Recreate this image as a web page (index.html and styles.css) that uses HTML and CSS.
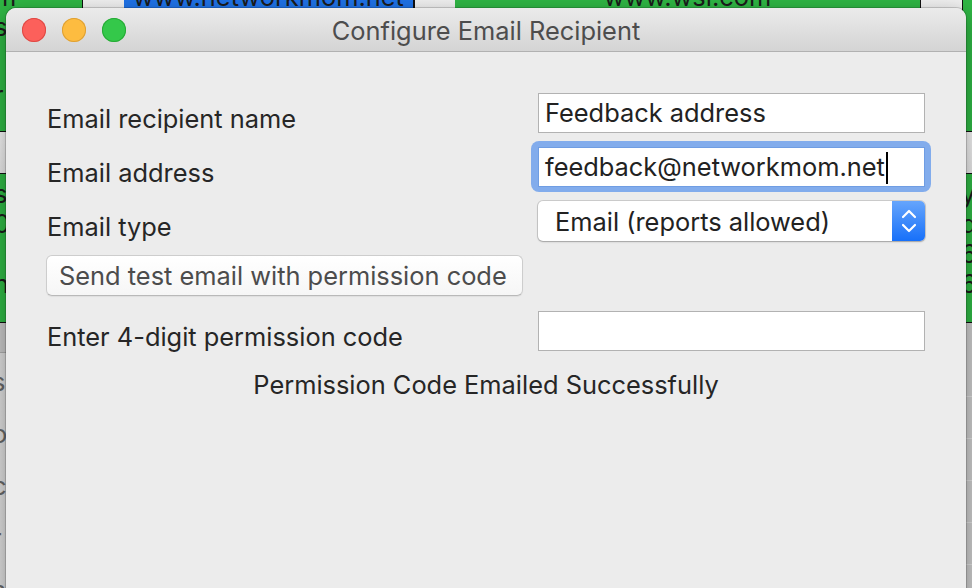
FILE: index.html
```html
<!DOCTYPE html>
<html lang="en">
<head>
<meta charset="utf-8">
<title>Configure Email Recipient</title>
<link rel="stylesheet" href="styles.css">
</head>
<body>
<div class="desk">
  <div class="drow r1">
    <div class="cell green c-a">
      <div class="etxt first clipl">m</div>
      <div class="etxt clipl">s:</div>
      <div class="etxt clipl gap38">r</div>
    </div>
    <div class="cell gray c-b"></div>
    <div class="cell blue c-c"><div class="etxt first center">www.networkmom.net</div></div>
    <div class="cell gray c-d"></div>
    <div class="cell green c-e"><div class="etxt first center">www.wsi.com</div></div>
    <div class="cell gray c-f"></div>
    <div class="cell green c-g"></div>
  </div>
  <div class="drow r2">
    <div class="cell gray grow"></div>
  </div>
  <div class="drow r3">
    <div class="cell green c-a3">
      <div class="etxt r3first clipl">s</div>
      <div class="etxt clipl">0</div>
      <div class="etxt clipl">&nbsp;</div>
      <div class="etxt clipl">n</div>
    </div>
    <div class="cell green grow"></div>
    <div class="cell green c-g3">
      <div class="etxt r3first">y</div>
      <div class="etxt">d</div>
      <div class="etxt">6</div>
      <div class="etxt">6</div>
    </div>
  </div>
  <div class="drow r4">
    <div class="side">
      <div class="side-head"></div>
      <div class="stxt">s</div>
      <div class="stxt">o</div>
      <div class="stxt">c</div>
      <div class="stxt">r</div>
      <div class="stxt">a</div>
    </div>
    <div class="cell grow lgray"></div>
    <div class="side-r">
      <div class="srow"></div><div class="srow"></div><div class="srow"></div>
      <div class="srow"></div><div class="srow"></div><div class="srow"></div>
    </div>
  </div>
</div>

<div class="window">
  <div class="titlebar">
    <div class="lights">
      <span class="light red"></span>
      <span class="light yellow"></span>
      <span class="light green-l"></span>
    </div>
    <div class="title">Configure Email Recipient</div>
    <div></div>
  </div>
  <div class="content">
    <div class="label">Email recipient name</div>
    <div class="field">Feedback address</div>

    <div class="label">Email address</div>
    <div class="field focused">feedback@networkmom.net<span class="caret"></span></div>

    <div class="label">Email type</div>
    <div class="popup">
      <span class="popup-text">Email (reports allowed)</span>
      <span class="stepper">
        <svg width="16" height="24" viewBox="0 0 16 24" aria-hidden="true">
          <path d="M2 8 L8 2 L14 8" fill="none" stroke="#fff" stroke-width="2.2" stroke-linecap="round" stroke-linejoin="round"/>
          <path d="M2 16 L8 22 L14 16" fill="none" stroke="#fff" stroke-width="2.2" stroke-linecap="round" stroke-linejoin="round"/>
        </svg>
      </span>
    </div>

    <div class="btn-row"><button class="btn" type="button">Send test email with permission code</button></div>

    <div class="label">Enter 4-digit permission code</div>
    <div class="field"></div>

    <div class="status">Permission Code Emailed Successfully</div>
  </div>
</div>
</body>
</html>
```

FILE: styles.css
```css
* { box-sizing: border-box; margin: 0; padding: 0; }
html, body { width: 972px; height: 588px; overflow: hidden; }
body {
  font-family: "Inter", "Liberation Sans", sans-serif;
  font-size: 25.4px;
  background: #d6d6d6;
  position: relative;
  color: #222;
}

/* ---------- background app (behind the dialog) ---------- */
.desk {
  width: 972px; height: 588px;
  display: flex; flex-direction: column;
  overflow: hidden;
}
.drow { display: flex; flex: none; border-bottom: 1px solid #111; }
.r1 { height: 132px; }
.r2 { height: 42px; }
.r3 { height: 149px; }
.r4 { flex: 1; border-bottom: 0; }
.cell { height: 100%; overflow: hidden; }
.grow { flex: 1; }
.green { background: #2fb544; }
.blue { background: #1f72e6; }
.gray { background: linear-gradient(#efefef, #e4e4e4); }
.lgray { background: #e2e2e2; }
.c-a { width: 83px; border-right: 1px solid #111; }
.c-b { width: 41px; }
.c-c { width: 291px; border-right: 2px solid #111; }
.c-d { width: 40px; }
.c-e { width: 466px; border-right: 1px solid #111; }
.c-f { width: 42px; border-right: 1px solid #111; }
.c-g { flex: 1; }
.c-a3 { width: 40px; }
.c-g3 { width: 12px; padding-left: 1px; }

.etxt { line-height: 30px; color: #1b1b1b; white-space: nowrap; }
.etxt.first { margin-top: -18px; }
.etxt.center { text-align: center; }
.clipl { text-indent: -6px; }
.gap38 { margin-top: 38px; }
.r3first { margin-top: 5px; }

.side { width: 40px; background: linear-gradient(90deg, #d9d9d9, #cfcfcf); display: flex; flex-direction: column; }
.side-head { height: 30px; background: #c4c4c4; border-bottom: 1px solid #a9a9a9; margin-bottom: 14px; }
.stxt { height: 52px; line-height: 30px; text-indent: -8px; color: #666; }
.side-r { width: 12px; background: #c8c8c8; display: flex; flex-direction: column; padding-top: 32px; }
.srow { height: 42px; border-bottom: 1px solid #dadada; }

/* ---------- dialog window ---------- */
.window {
  position: absolute;
  z-index: 1;
  left: 6px; top: 8px;
  width: 960px; height: 600px;
  background: #ececec;
  border-radius: 10px 10px 0 0;
  box-shadow: 0 0 0 1px rgba(0,0,0,0.16), 0 6px 20px rgba(0,0,0,0.35);
  display: flex; flex-direction: column;
  overflow: hidden;
}
.titlebar {
  flex: none;
  height: 44px;
  display: grid;
  grid-template-columns: 1fr auto 1fr;
  align-items: center;
  background: linear-gradient(#ebebeb, #d4d4d4);
  border-bottom: 1px solid #b1b1b1;
}
.lights { display: flex; gap: 16px; padding-left: 16px; }
.light { width: 24px; height: 24px; border-radius: 50%; display: block; }
.red { background: #fc605b; box-shadow: inset 0 0 0 1px #de4a45; }
.yellow { background: #fdbc40; box-shadow: inset 0 0 0 1px #dea035; }
.green-l { background: #34c84a; box-shadow: inset 0 0 0 1px #27aa36; }
.title { font-size: 25.4px; color: #4d4d4d; padding-top: 1px; }

.content {
  padding: 41px 41px 0 41px;
  display: grid;
  grid-template-columns: 1fr 387px;
  grid-template-rows: 40px 40px 40px 42px 40px auto;
  row-gap: 14px;
  align-items: start;
}
.label {
  line-height: 40px;
  padding-top: 6px;
  color: #262626;
  white-space: nowrap;
}
.field {
  height: 40px;
  background: #fff;
  border: 1px solid #b2b2b2;
  padding-left: 6px;
  line-height: 38px;
  color: #222;
  white-space: nowrap;
  position: relative;
}
.field.focused { border-color: #6f9de3; }
.field.focused::before {
  content: "";
  position: absolute;
  inset: -7px -7px -6px -8px;
  border-radius: 8px;
  background: #82acec;
  z-index: -1;
}
.caret {
  display: inline-block;
  width: 2px; height: 32px;
  background: #000;
  vertical-align: middle;
  margin-left: 1px;
  margin-top: -3px;
}

.popup {
  height: 40px;
  background: #fff;
  border-radius: 5px;
  box-shadow: 0 0 0 1px rgba(0,0,0,0.13), 0 1px 2px rgba(0,0,0,0.22);
  display: flex;
  align-items: center;
  overflow: hidden;
}
.popup-text { flex: 1; padding-left: 17px; color: #222; white-space: nowrap; }
.stepper {
  width: 33px; height: 100%;
  background: linear-gradient(#66a5fc, #1770f9);
  display: flex; align-items: center; justify-content: center;
}
.stepper svg { display: block; }

.btn-row { grid-column: 1 / -1; height: 42px; }
.btn {
  height: 41px;
  margin-left: -1px;
  padding: 0 15px 0 12px;
  font: inherit;
  color: #4c4c4c;
  background: linear-gradient(#ffffff, #f6f6f6);
  border: 1px solid #cdcdcd;
  border-bottom-color: #b9b9b9;
  border-radius: 6px;
  box-shadow: 0 1px 1px rgba(0,0,0,0.06);
  white-space: nowrap;
}

.status {
  grid-column: 1 / -1;
  text-align: center;
  line-height: 30px;
  margin-top: 5px;
  color: #262626;
}
```
